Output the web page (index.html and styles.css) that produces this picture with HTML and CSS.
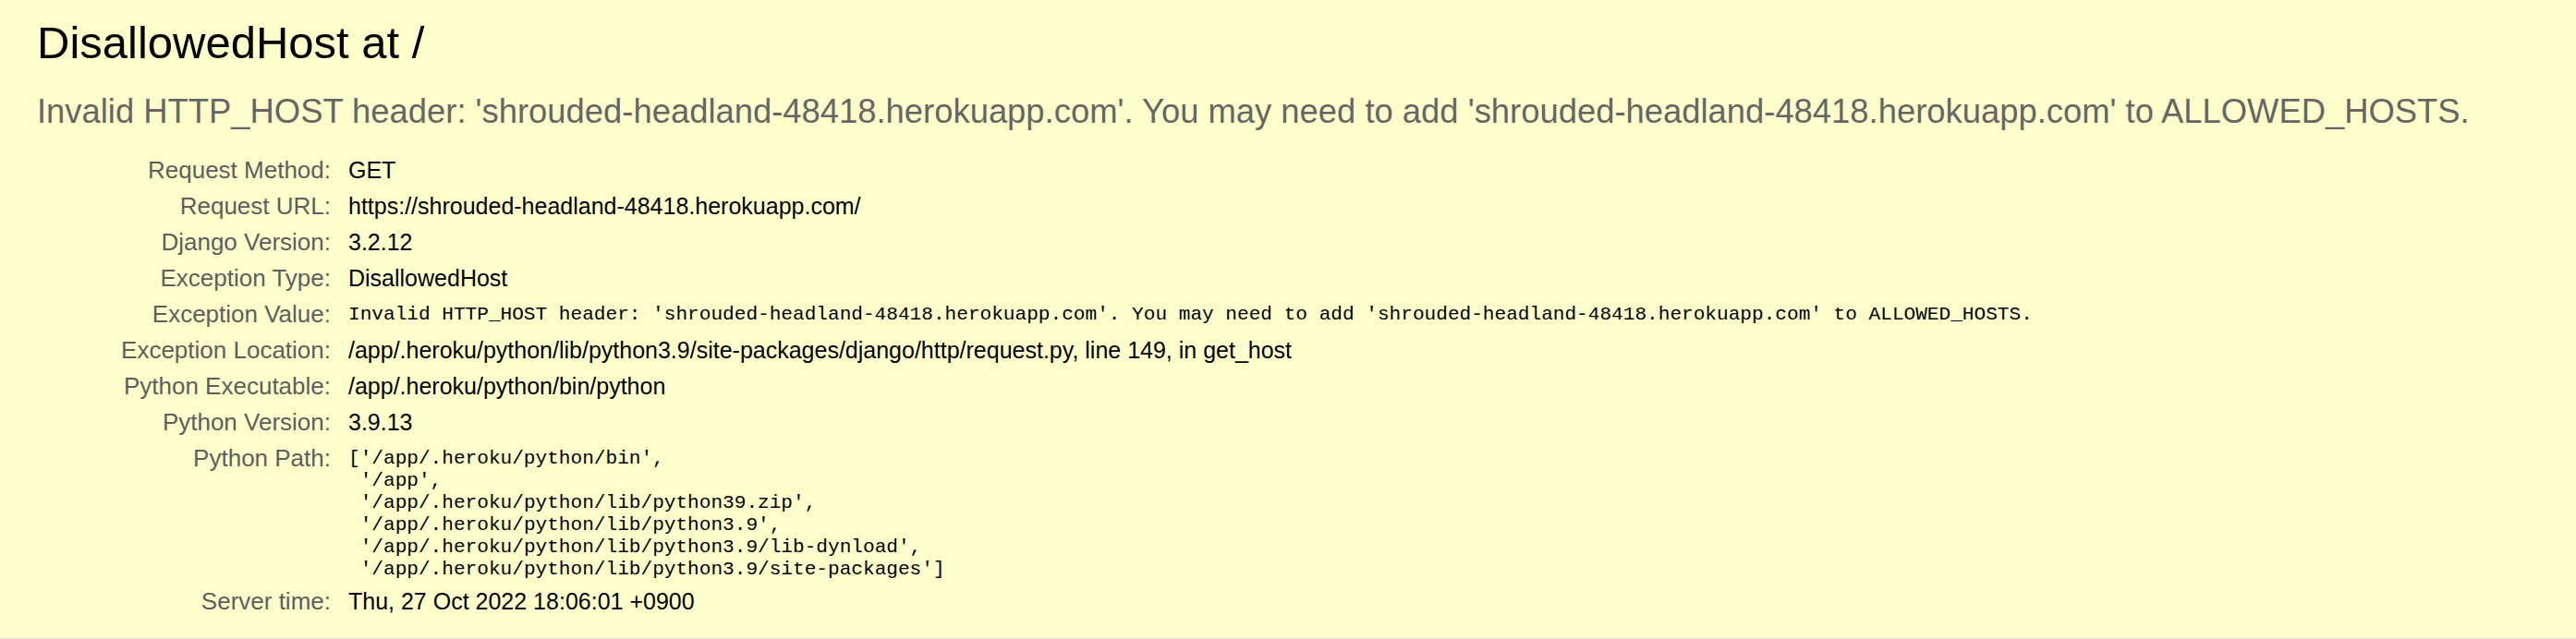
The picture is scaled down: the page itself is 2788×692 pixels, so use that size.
FILE: index.html
```html
<!DOCTYPE html>
<html lang="en">
<head>
<meta charset="utf-8">
<title>DisallowedHost at /</title>
<link rel="stylesheet" href="styles.css">
</head>
<body>
<div class="summary">
  <h1 class="title">DisallowedHost at /</h1>
  <h2 class="subtitle">Invalid HTTP_HOST header: 'shrouded-headland-48418.herokuapp.com'. You may need to add 'shrouded-headland-48418.herokuapp.com' to ALLOWED_HOSTS.</h2>
  <table class="meta">
    <tbody>
      <tr><th>Request Method:</th><td>GET</td></tr>
      <tr><th>Request URL:</th><td>https://shrouded-headland-48418.herokuapp.com/</td></tr>
      <tr><th>Django Version:</th><td>3.2.12</td></tr>
      <tr><th>Exception Type:</th><td>DisallowedHost</td></tr>
      <tr><th>Exception Value:</th><td><pre class="exc">Invalid HTTP_HOST header: 'shrouded-headland-48418.herokuapp.com'. You may need to add 'shrouded-headland-48418.herokuapp.com' to ALLOWED_HOSTS.</pre></td></tr>
      <tr><th>Exception Location:</th><td>/app/.heroku/python/lib/python3.9/site-packages/django/http/request.py, line 149, in get_host</td></tr>
      <tr><th>Python Executable:</th><td>/app/.heroku/python/bin/python</td></tr>
      <tr><th>Python Version:</th><td>3.9.13</td></tr>
      <tr><th>Python Path:</th><td><pre class="path">['/app/.heroku/python/bin',
 '/app',
 '/app/.heroku/python/lib/python39.zip',
 '/app/.heroku/python/lib/python3.9',
 '/app/.heroku/python/lib/python3.9/lib-dynload',
 '/app/.heroku/python/lib/python3.9/site-packages']</pre></td></tr>
      <tr><th>Server time:</th><td>Thu, 27 Oct 2022 18:06:01 +0900</td></tr>
    </tbody>
  </table>
</div>
</body>
</html>
```
FILE: styles.css
```css
* { margin: 0; padding: 0; box-sizing: content-box; }
html, body { background: #fff; }
body {
  font-family: "Liberation Sans", Arial, sans-serif;
  font-size: 26px;
  color: #000;
}
.summary {
  background: #ffc;
  padding: 20px 40px;
  border-bottom: 2px solid #ddd;
}
.title {
  font-weight: normal;
  font-size: 49px;
  line-height: 52px;
}
.subtitle {
  font-weight: normal;
  font-size: 36.4px;
  line-height: 46px;
  color: #666;
  margin-top: 26px;
  margin-bottom: 21px;
}
.meta {
  border: none;
  border-collapse: collapse;
  background: transparent;
  width: 100%;
}
.meta th, .meta td {
  vertical-align: top;
  padding: 4px 6px;
  line-height: 31px;
}
.meta td { font-size: 25px; }
.meta th {
  width: 312px;
  text-align: right;
  color: #5e5e5e;
  font-weight: normal;
  font-size: 26px;
  padding-right: 13px;
}
.exc, .path {
  font-family: "Liberation Mono", "Courier New", monospace;
  font-size: 21.1px;
  white-space: pre-wrap;
}
.exc { line-height: 31px; }
.path { line-height: 24px; padding-top: 3px; }
```
